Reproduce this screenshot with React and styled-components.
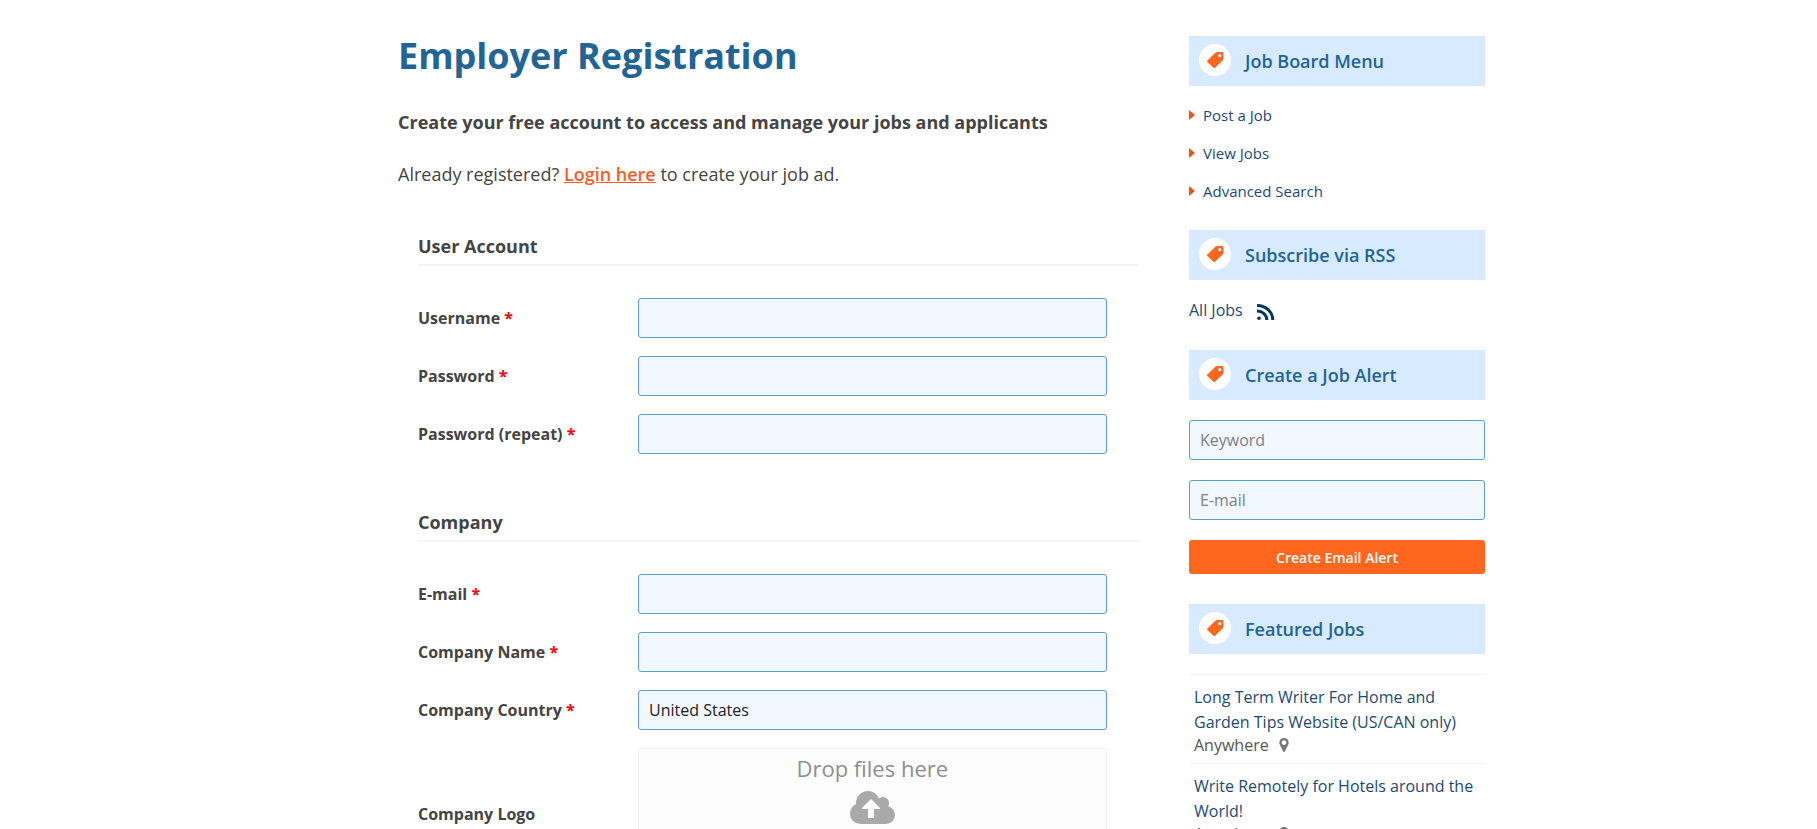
import React, { useState } from "react";
import styled, { createGlobalStyle } from "styled-components";

const accountFields = [
  { id: "username", label: "Username", type: "text" },
  { id: "password", label: "Password", type: "password" },
  { id: "password2", label: "Password (repeat)", type: "password" },
];

const companyFields = [
  { id: "email", label: "E-mail", type: "email" },
  { id: "company", label: "Company Name", type: "text" },
];

const menuLinks = ["Post a Job", "View Jobs", "Advanced Search"];

const featuredJobs = [
  {
    title: "Long Term Writer For Home and Garden Tips Website (US/CAN only)",
    location: "Anywhere",
  },
  {
    title: "Write Remotely for Hotels around the World!",
    location: "Anywhere",
  },
];

function TagIcon() {
  return (
    <svg width="17" height="17" viewBox="0 0 17 17" aria-hidden="true">
      <path
        fill="#ff671f"
        fillRule="evenodd"
        d="M8.6.6Q9.2 0 10 0h5q1.5 0 1.5 1.5v5.3q0 .8-.6 1.4l-7.9 7.6q-.8.7-1.6 0L.4 10q-.8-.8 0-1.6zM12.8 2.1a1.6 1.6 0 1 0 0 3.2 1.6 1.6 0 0 0 0-3.2z"
      />
    </svg>
  );
}

function RssIcon() {
  return (
    <svg width="18" height="16" viewBox="0 0 18 16" aria-hidden="true">
      <g fill="none" stroke="#003663" strokeWidth="3">
        <path d="M0 1.5A15.6 14.6 0 0 1 15.8 16" />
        <path d="M0 7A9.7 9 0 0 1 9.9 16" />
      </g>
      <circle cx="2" cy="14.2" r="1.8" fill="#003663" />
    </svg>
  );
}

function PinIcon() {
  return (
    <svg width="10" height="14" viewBox="0 128 1024 1536" aria-hidden="true">
      <path
        fill="#777"
        d="M768 640q0-106-75-181t-181-75-181 75-75 181 75 181 181 75 181-75 75-181zm256 0q0 109-33 179l-364 774q-16 33-47.5 52t-67.5 19-67.5-19-46.5-52L33 819Q0 749 0 640q0-212 150-362t362-150 362 150 150 362z"
      />
    </svg>
  );
}

function UploadIcon() {
  return (
    <svg width="45" height="33" viewBox="0 128 1920 1408" aria-hidden="true">
      <path
        fill="#a9a9a9"
        d="M1280 864q0-14-9-23l-352-352q-9-9-23-9t-23 9l-351 351q-10 12-10 24 0 14 9 23t23 9h224v352q0 13 9.5 22.5t22.5 9.5h192q13 0 22.5-9.5t9.5-22.5V896h224q13 0 22.5-9.5t9.5-22.5zm640 288q0 159-112.5 271.5T1536 1536H448q-185 0-316.5-131.5T0 1088q0-130 70-240t188-165q-2-30-2-43 0-212 150-362t362-150q156 0 285.5 87T1242 446q71-62 166-62 106 0 181 75t75 181q0 76-41 138 130 31 213.5 135.5T1920 1152z"
      />
    </svg>
  );
}

function WidgetTitle({ children }) {
  return (
    <WidgetHeader>
      <WidgetBadge>
        <TagIcon />
      </WidgetBadge>
      <h3>{children}</h3>
    </WidgetHeader>
  );
}

function Field({ id, label, required, children }) {
  return (
    <FieldRow>
      <label htmlFor={id}>
        {label} {required && <Required>*</Required>}
      </label>
      <FieldControl>{children}</FieldControl>
    </FieldRow>
  );
}

function App() {
  const [country, setCountry] = useState("us");

  return (
    <>
      <GlobalStyle />
      <Page>
        <Main>
          <Title>Employer Registration</Title>
          <Intro>
            <strong>
              Create your free account to access and manage your jobs and
              applicants
            </strong>
          </Intro>
          <Intro>
            Already registered? <a href="#login">Login here</a> to create your
            job ad.
          </Intro>

          <Form>
            <section>
              <SectionTitle>User Account</SectionTitle>
              {accountFields.map(({ id, label, type }) => (
                <Field key={id} id={id} label={label} required>
                  <Input id={id} type={type} />
                </Field>
              ))}
            </section>

            <section>
              <SectionTitle>Company</SectionTitle>
              {companyFields.map(({ id, label, type }) => (
                <Field key={id} id={id} label={label} required>
                  <Input id={id} type={type} />
                </Field>
              ))}
              <Field id="country" label="Company Country" required>
                <Select
                  id="country"
                  value={country}
                  onChange={(e) => setCountry(e.target.value)}
                >
                  <option value="us">United States</option>
                  <option value="ca">Canada</option>
                </Select>
              </Field>
              <Field id="logo" label="Company Logo">
                <DropZone htmlFor="logo">
                  <span>Drop files here</span>
                  <UploadIcon />
                  <input id="logo" type="file" />
                </DropZone>
              </Field>
            </section>
          </Form>
        </Main>

        <Sidebar>
          <section>
            <WidgetTitle>Job Board Menu</WidgetTitle>
            <Menu>
              {menuLinks.map((link) => (
                <li key={link}>
                  <a href="#menu">{link}</a>
                </li>
              ))}
            </Menu>
          </section>

          <section>
            <WidgetTitle>Subscribe via RSS</WidgetTitle>
            <RssLink href="#rss">
              All Jobs <RssIcon />
            </RssLink>
          </section>

          <section>
            <WidgetTitle>Create a Job Alert</WidgetTitle>
            <AlertForm>
              <Input type="text" placeholder="Keyword" aria-label="Keyword" />
              <Input type="email" placeholder="E-mail" aria-label="E-mail" />
              <AlertButton type="button">Create Email Alert</AlertButton>
            </AlertForm>
          </section>

          <section>
            <WidgetTitle>Featured Jobs</WidgetTitle>
            <JobList>
              {featuredJobs.map((job) => (
                <li key={job.title}>
                  <a href="#job">{job.title}</a>
                  <JobLocation>
                    {job.location} <PinIcon />
                  </JobLocation>
                </li>
              ))}
            </JobList>
          </section>
        </Sidebar>
      </Page>
    </>
  );
}

export default App;

const GlobalStyle = createGlobalStyle`
  * {
    box-sizing: border-box;
  }
  body {
    margin: 0;
    background: #fff;
    color: #444;
    font-family: "Open Sans", sans-serif;
    font-size: 16px;
  }
  h1, h2, h3, p, ul {
    margin: 0;
    padding: 0;
  }
  ul {
    list-style: none;
  }
  a {
    color: #1c4a73;
    text-decoration: none;
  }
  input, select, button {
    font-family: inherit;
  }
`;
const Page = styled.div`
  display: flex;
  align-items: flex-start;
  gap: 30px;
  max-width: 1187px;
  margin: 0 auto;
  padding: 32px 17px 40px 83px;
`;
const Main = styled.main`
  flex: 1;
  min-width: 0;
`;
const Title = styled.h1`
  margin-bottom: 28px;
  color: #216496;
  font-size: 36px;
  font-weight: 700;
  line-height: 48px;
`;
const Intro = styled.p`
  margin-bottom: 24px;
  font-size: 18px;
  line-height: 28px;
  > a {
    color: #ff5a1f;
    font-weight: 600;
    text-decoration: underline;
  }
`;
const Form = styled.form`
  display: flex;
  flex-direction: column;
  gap: 54px;
  padding: 20px 20px 0;
`;
const SectionTitle = styled.h2`
  margin-bottom: 32px;
  padding-bottom: 4px;
  border-bottom: 2px solid #f5f5f5;
  font-size: 18px;
  font-weight: 700;
  line-height: 28px;
`;
const FieldRow = styled.div`
  display: flex;
  align-items: center;
  & + & {
    margin-top: 18px;
  }
  > label {
    width: 220px;
    font-weight: 700;
    line-height: 24px;
  }
`;
const FieldControl = styled.div`
  width: 65%;
`;
const Required = styled.span`
  color: red;
`;
const Input = styled.input`
  display: block;
  width: 100%;
  height: 40px;
  padding: 0 10px;
  border: 1px solid #5b9dcb;
  border-radius: 3px;
  background: #f0f7ff;
  color: #222;
  font-size: 16px;
  &::placeholder {
    color: #808080;
  }
`;
const Select = styled(Input).attrs({ as: "select" })`
  appearance: none;
`;
const DropZone = styled.label`
  display: flex;
  flex-direction: column;
  align-items: center;
  gap: 8px;
  height: 132px;
  padding-top: 4px;
  border: 1px solid #f3f3f3;
  background: #fcfcfc;
  color: #8f8f8f;
  font-size: 22px;
  line-height: 30px;
  > input {
    display: none;
  }
`;
const Sidebar = styled.aside`
  width: 296px;
  padding-top: 4px;
  > section + section {
    margin-top: 28px;
  }
  > section:nth-child(2) {
    margin-top: 20px;
  }
  > section:last-child {
    margin-top: 30px;
  }
`;
const WidgetHeader = styled.div`
  display: flex;
  align-items: center;
  gap: 14px;
  height: 50px;
  padding: 0 10px;
  background: #d8eaff;
  > h3 {
    color: #216496;
    font-size: 18px;
    font-weight: 600;
  }
`;
const WidgetBadge = styled.span`
  display: flex;
  align-items: center;
  justify-content: center;
  width: 32px;
  height: 32px;
  margin-bottom: 2px;
  border-radius: 50%;
  background: #fff;
`;
const Menu = styled.ul`
  margin-top: 10px;
  > li {
    display: flex;
    align-items: center;
    gap: 8px;
    font-size: 15px;
    line-height: 38px;
  }
  > li::before {
    content: "";
    border-left: 6px solid #ff5000;
    border-top: 5px solid transparent;
    border-bottom: 5px solid transparent;
  }
`;
const RssLink = styled.a`
  display: flex;
  align-items: center;
  gap: 14px;
  margin-top: 18px;
  line-height: 24px;
  > svg {
    margin-top: 4px;
  }
`;
const AlertForm = styled.form`
  display: grid;
  gap: 20px;
  margin-top: 20px;
`;
const AlertButton = styled.button`
  height: 34px;
  border: 0;
  border-radius: 3px;
  background: #ff671f;
  color: #fff;
  font-size: 14px;
  font-weight: 600;
`;
const JobList = styled.ul`
  margin-top: 20px;
  > li {
    padding: 10px 5px 8px;
    border-top: 1px solid #f3f3f3;
    line-height: 25px;
  }
`;
const JobLocation = styled.div`
  display: flex;
  align-items: center;
  gap: 10px;
  color: #555;
  line-height: 20px;
`;
